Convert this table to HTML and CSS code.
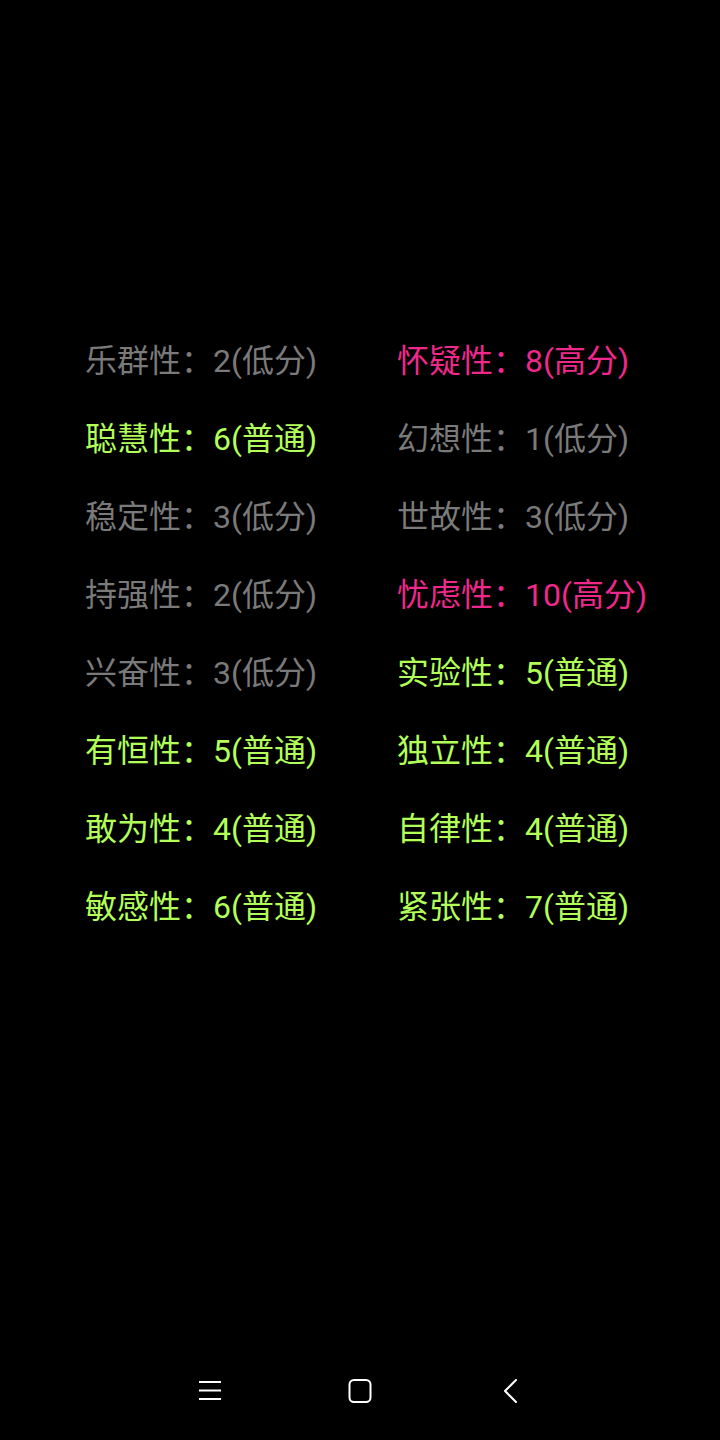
FILE: index.html
```html
<!DOCTYPE html>
<html lang="zh-CN">
<head>
<meta charset="utf-8">
<title>性格因素</title>
<link rel="stylesheet" href="styles.css">
</head>
<body>
<div class="screen">
  <main class="grid">
    <div class="item low">乐群性：2(低分)</div>
    <div class="item high">怀疑性：8(高分)</div>
    <div class="item mid">聪慧性：6(普通)</div>
    <div class="item low">幻想性：1(低分)</div>
    <div class="item low">稳定性：3(低分)</div>
    <div class="item low">世故性：3(低分)</div>
    <div class="item low">持强性：2(低分)</div>
    <div class="item high">忧虑性：10(高分)</div>
    <div class="item low">兴奋性：3(低分)</div>
    <div class="item mid">实验性：5(普通)</div>
    <div class="item mid">有恒性：5(普通)</div>
    <div class="item mid">独立性：4(普通)</div>
    <div class="item mid">敢为性：4(普通)</div>
    <div class="item mid">自律性：4(普通)</div>
    <div class="item mid">敏感性：6(普通)</div>
    <div class="item mid">紧张性：7(普通)</div>
  </main>
  <nav class="navbar">
    <svg class="nav-icon" width="24" height="24" viewBox="0 0 24 24"><path d="M1 3H23M1 11.5H23M1 20H23" stroke="#fff" stroke-width="2" fill="none"/></svg>
    <svg class="nav-icon" width="24" height="24" viewBox="0 0 24 24"><rect x="1.5" y="1" width="21" height="22" rx="4.5" stroke="#fff" stroke-width="2" fill="none"/></svg>
    <svg class="nav-icon" width="24" height="24" viewBox="0 0 24 24"><path d="M18 1L7 12L18 23" stroke="#fff" stroke-width="2" fill="none" stroke-linecap="round" stroke-linejoin="round"/></svg>
  </nav>
</div>
</body>
</html>
```
FILE: styles.css
```css
html, body {
  margin: 0;
  padding: 0;
  background: #000;
}
.screen {
  width: 720px;
  height: 1440px;
  display: flex;
  flex-direction: column;
  background: #000;
  font-family: "Roboto", "Noto Sans CJK SC", sans-serif;
}
.grid {
  display: grid;
  grid-template-columns: 312px auto;
  padding: 322px 0 0 85px;
}
.item {
  font-size: 32px;
  line-height: 78px;
  height: 78px;
  white-space: nowrap;
}
.low { color: #7a7a7a; }
.mid { color: #b2ff59; }
.high { color: #f0288c; }
.navbar {
  margin-top: auto;
  height: 98px;
  display: flex;
  justify-content: center;
  align-items: center;
  gap: 126px;
}
.nav-icon { display: block; }
```
